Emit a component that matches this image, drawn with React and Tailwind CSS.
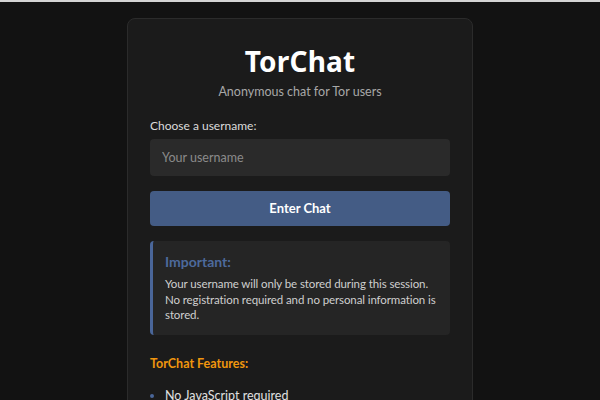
import React from "react";

export default function App() {
  return (
    <div className="min-h-screen bg-[#121212] text-[#e0e0e0]" style={{ fontFamily: 'Lato, "Noto Sans", sans-serif' }}>
      <div className="h-[2px] bg-[#d4d4d4]" />
      <div className="flex justify-center pt-4">
        <div className="w-[346px] rounded-lg border border-[#2b2b2b] bg-[#1b1b1b] px-[22px] pt-[25px] pb-6">
          <h1 className="text-center text-[28px] font-bold leading-[34px] tracking-[0.2px] text-white" style={{ fontFamily: '"Noto Sans", sans-serif' }}>TorChat</h1>
          <p className="mt-[5px] text-center text-[12.5px] leading-[18px] text-[#a8a8a8]">Anonymous chat for Tor users</p>
          <label className="mt-[16px] block text-[12px] leading-[18px] text-[#dcdcdc]">Choose a username:</label>
          <input
            className="mt-1 h-[37px] w-full rounded bg-[#2a2a2a] px-3 text-[12.5px] text-white placeholder-[#8a8a8a] outline-none"
            placeholder="Your username"
          />
          <button className="mt-[15px] h-[35px] w-full rounded bg-[#445c85] text-[13px] font-bold text-white">Enter Chat</button>
          <div className="mt-[15px] rounded border-l-[3px] border-[#4a6699] bg-[#252525] pl-3 pr-3 pt-3 pb-[12px]">
            <h3 className="text-[14px] font-bold leading-[18px] text-[#4d6a9c]">Important:</h3>
            <p className="mt-[5px] text-[11.5px] leading-[15.6px] tracking-[-0.1px] text-[#cfcfcf]">
              Your username will only be stored during this session. No registration required and no personal information is stored.
            </p>
          </div>
          <h4 className="mt-5 text-[12.5px] font-bold leading-[18px] text-[#f0960e]">TorChat Features:</h4>
          <ul className="mt-[14px] list-disc pl-[15px] text-[12.5px] leading-[18px] text-[#e0e0e0] marker:text-[#4a6699]">
            <li>No JavaScript required</li>
            <li>Messages auto-delete</li>
          </ul>
        </div>
      </div>
    </div>
  );
}
